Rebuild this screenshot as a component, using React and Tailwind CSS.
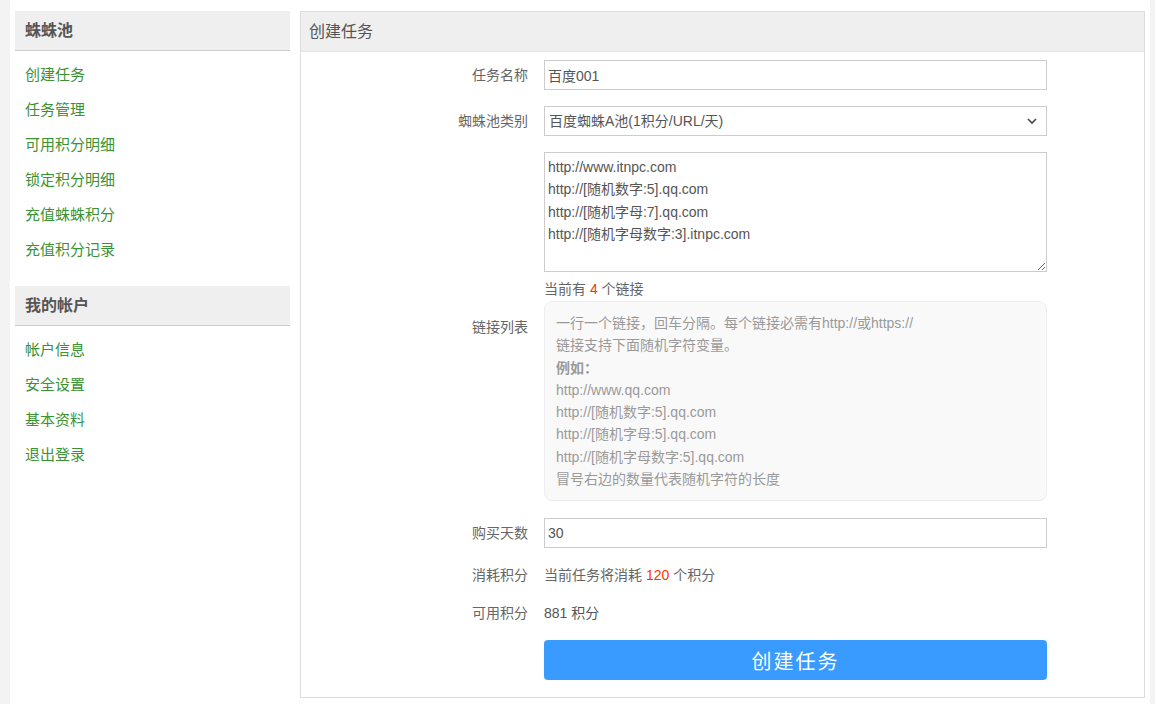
import React from "react";

const font = { fontFamily: '"Liberation Sans", "Noto Sans CJK SC", sans-serif' };

const SideGroup = ({ title, items }) => {
  return (
    <div className="mb-[18px]">
      <div className="h-[40px] bg-[#efefef] border-b border-[#cccccc] flex items-center px-[10px] pt-[1px] text-[16px] font-bold text-[#555]">
        {title}
      </div>
      <ul className="pt-[7px]">
        {items.map((t) => {
          return (
            <li key={t} className="h-[35px] flex items-center px-[10px] text-[15px] text-[#3a9232]">
              <a href="#">{t}</a>
            </li>
          );
        })}
      </ul>
    </div>
  );
};

const Label = ({ children }) => {
  return <div className="text-right text-[14px] text-[#666] leading-[20px]">{children}</div>;
};

export default function App() {
  const tips = [
    "http://www.qq.com",
    "http://[随机数字:5].qq.com",
    "http://[随机字母:5].qq.com",
    "http://[随机字母数字:5].qq.com",
    "冒号右边的数量代表随机字符的长度",
  ];
  return (
    <div className="min-h-[704px] bg-[#f3f3f3] pl-[10px] pr-[5px]" style={font}>
      <div className="bg-white min-h-[704px] flex gap-[10px] pt-[11px] pl-[5px] pr-[5px]">
        <aside className="w-[275px] shrink-0">
          <SideGroup
            title="蛛蛛池"
            items={["创建任务", "任务管理", "可用积分明细", "锁定积分明细", "充值蛛蛛积分", "充值积分记录"]}
          />
          <SideGroup title="我的帐户" items={["帐户信息", "安全设置", "基本资料", "退出登录"]} />
        </aside>

        <section className="w-[845px] shrink-0 h-[687px] border border-[#dddddd]">
          <header className="h-[40px] bg-[#efefef] border-b border-[#e3e3e3] flex items-center px-[8px] pt-[1px] text-[16px] text-[#555]">
            创建任务
          </header>
          <div className="grid grid-cols-[227px_503px] gap-x-4 pt-[8px]">
            <div className="h-[30px] flex items-center justify-end mb-4">
              <Label>任务名称</Label>
            </div>
            <div className="mb-4">
              <input
                defaultValue="百度001"
                className="w-full h-[30px] border border-[#cccccc] px-[3px] text-[14px] text-[#555] outline-none"
              />
            </div>

            <div className="h-[30px] flex items-center justify-end mb-4">
              <Label>蜘蛛池类别</Label>
            </div>
            <div className="mb-4 relative">
              <select className="w-full h-[30px] border border-[#cccccc] pl-[4px] text-[14px] text-[#555] appearance-none bg-white outline-none">
                <option>百度蜘蛛A池(1积分/URL/天)</option>
              </select>
              <svg className="absolute right-[10px] top-[11px]" width="10" height="8" viewBox="0 0 10 8">
                <path d="M1 2 L5 6 L9 2" fill="none" stroke="#444" strokeWidth="1.6" />
              </svg>
            </div>

            <div className="flex items-center justify-end">
              <Label>链接列表</Label>
            </div>
            <div>
              <textarea
                defaultValue={"http://www.itnpc.com\nhttp://[随机数字:5].qq.com\nhttp://[随机字母:7].qq.com\nhttp://[随机字母数字:3].itnpc.com"}
                className="block w-full h-[120px] border border-[#cccccc] px-[3px] pt-[3px] text-[14px] leading-[22.3px] text-[#555] outline-none"
              />
              <div className="mt-[7px] text-[14px] leading-[20px] text-[#666]">
                当前有 <span className="text-[#ff3300]">4</span> 个链接
              </div>
              <div className="mt-[2px] h-[200px] bg-[#f9f9f9] border border-[#eeeeee] rounded-[8px] px-[11px] py-[10px] text-[14px] leading-[22.3px] text-[#999]">
                <div>一行一个链接，回车分隔。每个链接必需有http://或https://</div>
                <div>链接支持下面随机字符变量。</div>
                <div className="font-bold">例如：</div>
                {tips.map((t) => {
                  return <div key={t}>{t}</div>;
                })}
              </div>
            </div>

            <div className="h-[30px] flex items-center justify-end mt-[17px]">
              <Label>购买天数</Label>
            </div>
            <div className="mt-[17px]">
              <input
                defaultValue="30"
                className="w-full h-[30px] border border-[#cccccc] px-[3px] text-[14px] text-[#555] outline-none"
              />
            </div>

            <div className="h-[30px] flex items-center justify-end mt-3">
              <Label>消耗积分</Label>
            </div>
            <div className="h-[30px] flex items-center mt-3 text-[14px] text-[#666]">
              当前任务将消耗&nbsp;<span className="text-[#ff3300]">120</span>&nbsp;个积分
            </div>

            <div className="h-[30px] flex items-center justify-end mt-2">
              <Label>可用积分</Label>
            </div>
            <div className="h-[30px] flex items-center mt-2 text-[14px] text-[#555]">881 积分</div>

            <div className="mt-3"></div>
            <div className="mt-3">
              <button className="w-full h-[40px] bg-[#399bff] rounded-[4px] pt-[3px] text-white text-[20px] tracking-[2px]">
                创建任务
              </button>
            </div>
          </div>
        </section>
      </div>
    </div>
  );
}
